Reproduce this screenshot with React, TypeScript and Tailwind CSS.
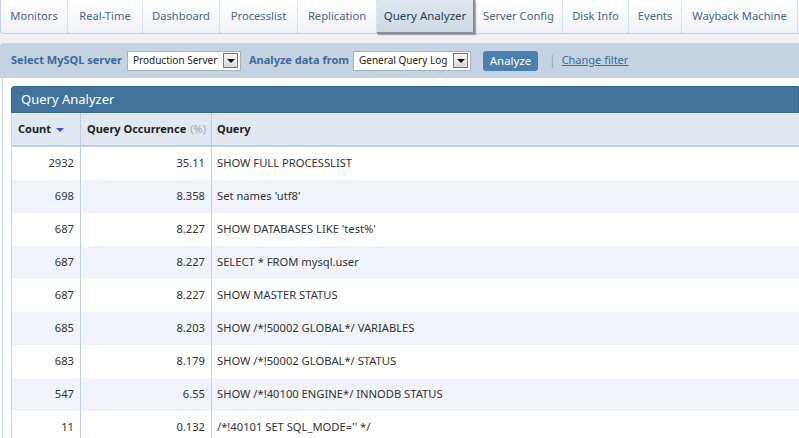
import React from "react";

const tabs = [
  { label: "Monitors", w: "w-[67px]" },
  { label: "Real-Time", w: "w-[75px]" },
  { label: "Dashboard", w: "w-[77px]" },
  { label: "Processlist", w: "w-[78px]" },
  { label: "Replication", w: "w-[79px]" },
  { label: "Query Analyzer", w: "w-[98px]", active: true },
  { label: "Server Config", w: "w-[88px]" },
  { label: "Disk Info", w: "w-[66px]" },
  { label: "Events", w: "w-[53px]" },
  { label: "Wayback Machine", w: "w-[116px]" },
];

const rows = [
  ["2932", "35.11", "SHOW FULL PROCESSLIST"],
  ["698", "8.358", "Set names 'utf8'"],
  ["687", "8.227", "SHOW DATABASES LIKE 'test%'"],
  ["687", "8.227", "SELECT * FROM mysql.user"],
  ["687", "8.227", "SHOW MASTER STATUS"],
  ["685", "8.203", "SHOW /*!50002 GLOBAL*/ VARIABLES"],
  ["683", "8.179", "SHOW /*!50002 GLOBAL*/ STATUS"],
  ["547", "6.55", "SHOW /*!40100 ENGINE*/ INNODB STATUS"],
  ["11", "0.132", "/*!40101 SET SQL_MODE='' */"],
];

const Select = ({ value, w }: { value: string; w: string }) => (
  <div className={`${w} shrink-0 h-[20px] bg-white border border-[#a9b4bf] flex items-center justify-between pl-[5px] pr-[2px]`}>
    <span className="text-[10px] text-[#222] whitespace-nowrap">{value}</span>
    <span className="w-[15px] h-[15px] border border-[#777] bg-gradient-to-b from-[#f4f4f4] to-[#d8d8d8] flex items-center justify-center">
      <span className="w-0 h-0 border-l-[4px] border-r-[4px] border-t-[4px] border-l-transparent border-r-transparent border-t-[#111] mt-[1px]" />
    </span>
  </div>
);

const App = () => {
  return (
    <div className="w-[799px] h-[438px] overflow-hidden bg-white font-['Noto_Sans',sans-serif]">
      {/* tabs */}
      <div className="h-[34px] flex bg-gradient-to-b from-white to-[#eef1f5] border-b border-l border-[#c8d3dd] rounded-bl-[3px]">
        {tabs.map((t) =>
          t.active ? (
            <div
              key={t.label}
              className={`${t.w} h-[34px] flex items-center justify-center text-[11.5px] text-[#2d3e50] bg-gradient-to-b from-[#dfe6ed] to-[#cfd9e3] border-r-2 border-b-2 border-[#8a8f95] shadow-[1px_1px_1px_rgba(0,0,0,0.3)]`}
            >
              {t.label}
            </div>
          ) : (
            <div
              key={t.label}
              className={`${t.w} h-full flex items-center justify-center text-[11.2px] text-[#4a6784] border-r border-dotted border-[#c3cfdb]`}
            >
              {t.label}
            </div>
          )
        )}
      </div>
      <div className="h-[9px] bg-[#f0f0f4]" />
      {/* filter bar */}
      <div className="h-[35px] bg-[#c3d3e1] rounded-tl-[3px] flex items-center pl-[11px] text-[11px] whitespace-nowrap">
        <span className="w-[107px] font-bold text-[#3c6c9a]">Select MySQL server</span>
        <div className="ml-[9px]">
          <Select value="Production Server" w="w-[114px]" />
        </div>
        <span className="ml-[8px] w-[96px] font-bold text-[#3c6c9a]">Analyze data from</span>
        <div className="ml-[8px]">
          <Select value="General Query Log" w="w-[118px]" />
        </div>
        <button className="ml-[12px] h-[20px] w-[55px] rounded-[3px] bg-[#4b7fae] text-white text-[11.5px] flex items-center justify-center">
          Analyze
        </button>
        <span className="ml-[11px] text-[#8fa6bb] text-[12px]">|</span>
        <span className="ml-[6px] text-[#3c6c9a] underline text-[11px]">Change filter</span>
      </div>
      {/* panel */}
      <div className="flex">
        <div className="w-[11px] pl-[2px]">
          <div className="w-[1px] h-[400px] bg-[#cfdbe6]" />
        </div>
        <div className="flex-1 pt-[8px]">
          <div className="h-[27px] bg-[#43739c] border border-[#3a678f] rounded-tl-[3px] flex items-center pl-[9px] text-[13px] text-white">
            Query Analyzer
          </div>
          <div className="border-l border-[#c9d6e3]">
            <div className="h-[34px] flex bg-[#e1e8f0] border-b-2 border-[#bdd0e2] text-[11px] font-bold text-[#222] whitespace-nowrap">
              <div className="w-[69px] border-r border-[#bfcfdf] flex items-center pl-[6px]">
                Count
                <span className="ml-[5px] mt-[2px] w-0 h-0 border-l-[4px] border-r-[4px] border-t-[4px] border-l-transparent border-r-transparent border-t-[#3b4fd6]" />
              </div>
              <div className="w-[131px] border-r border-[#bfcfdf] flex items-center pl-[6px]">
                Query Occurrence <span className="ml-[4px] font-normal text-[#a0a8b0]">(%)</span>
              </div>
              <div className="flex-1 flex items-center pl-[5px]">Query</div>
            </div>
            {rows.map((r, i) => (
              <div
                key={i}
                className={`h-[33px] flex text-[11.2px] text-[#333] whitespace-nowrap ${i % 2 === 1 ? "bg-[#f0f4f8]" : "bg-white"}`}
              >
                <div className="w-[69px] border-r border-[#bfcfdf] flex items-center justify-end pr-[6px]">
                  {r[0]}
                </div>
                <div className="w-[131px] border-r border-[#bfcfdf] flex items-center justify-end pr-[6px]">
                  {r[1]}
                </div>
                <div className="flex-1 flex items-center pl-[5px]">{r[2]}</div>
              </div>
            ))}
          </div>
        </div>
      </div>
    </div>
  );
};

export default App;
